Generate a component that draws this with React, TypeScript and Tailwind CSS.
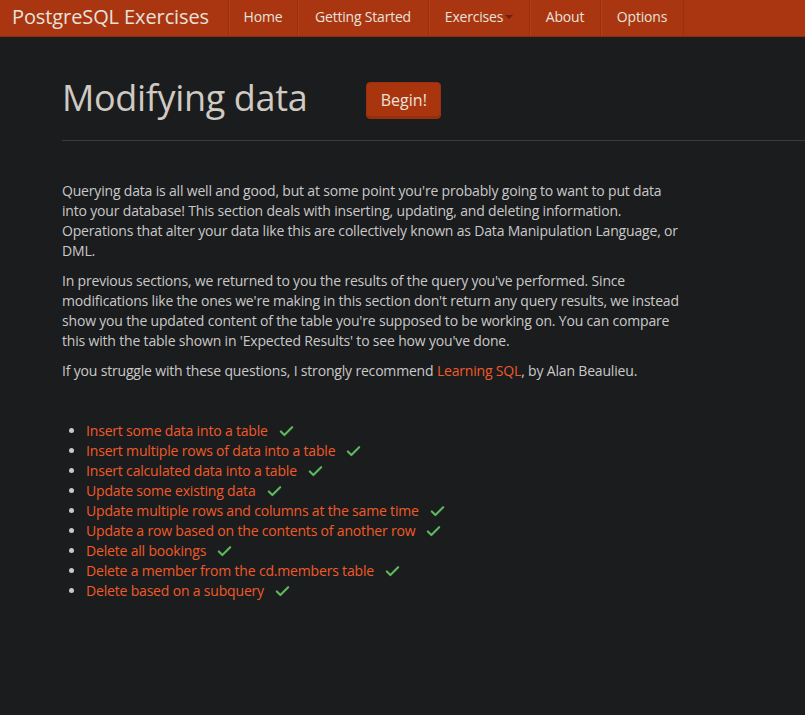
import { Check } from "lucide-react";

const navItems = [
  { label: "Home", width: "w-[69px]" },
  { label: "Getting Started", width: "w-[131px]" },
  { label: "Exercises", width: "w-[101px]" },
  { label: "About", width: "w-[71px]" },
  { label: "Options", width: "w-[83px]" },
];

const questions = [
  "Insert some data into a table",
  "Insert multiple rows of data into a table",
  "Insert calculated data into a table",
  "Update some existing data",
  "Update multiple rows and columns at the same time",
  "Update a row based on the contents of another row",
  "Delete all bookings",
  "Delete a member from the cd.members table",
  "Delete based on a subquery",
];

function Navbar() {
  return (
    <nav className="flex h-[37px] items-stretch bg-[#aa3511] border-b border-[#8f2c0d]">
      <a className="flex w-[228px] items-center pl-3 pb-[3px] text-[20px] tracking-[-0.1px] text-[#e8e2dc]">
        PostgreSQL Exercises
      </a>
      <ul className="flex items-stretch border-l border-[#98300f]">
        {navItems.map((item) => (
          <li
            key={item.label}
            className={`flex ${item.width} items-center justify-center pb-[3px] text-[14px] tracking-[-0.2px] text-[#e8e2dc] border-r border-[#98300f] shadow-[inset_1px_0_0_#b53d17]`}
          >
            {item.label}
            {item.label === "Exercises" && (
              <span className="ml-[2px] mt-[1px] inline-block border-x-[4px] border-t-[4px] border-x-transparent border-t-[#6b2210]" />
            )}
          </li>
        ))}
      </ul>
    </nav>
  );
}

export default function App() {
  return (
    <div
      className="min-h-[715px] bg-[#1b1c1e] text-[#c9c9c9]"
      style={{ fontFamily: '"Open Sans", sans-serif' }}
    >
      <Navbar />
      <div className="pl-[62px]">
        <div className="flex items-center gap-[59px] pt-[39px] pb-[20px]">
          <h1 className="text-[36px] leading-[44px] tracking-[-0.35px] text-[#cfcac2]">Modifying data</h1>
          <button className="mt-[4px] h-[37px] w-[75px] rounded-[4px] border border-[#9a300f] bg-[#a9350f] text-[16px] text-[#eae3dc] shadow-[inset_0_-2px_0_rgba(0,0,0,0.12)]">
            Begin!
          </button>
        </div>
        <hr className="border-t border-[#3a3b3e]" />

        <div className="mt-[40px] w-[622px] text-[14px] leading-[20px] tracking-[-0.18px]">
          <p className="mb-[10px]">
            Querying data is all well and good, but at some point you're probably going to want to put data
            into your database! This section deals with inserting, updating, and deleting information.
            Operations that alter your data like this are collectively known as Data Manipulation Language, or
            DML.
          </p>
          <p className="mb-[10px]">
            In previous sections, we returned to you the results of the query you've performed. Since
            modifications like the ones we're making in this section don't return any query results, we instead
            show you the updated content of the table you're supposed to be working on. You can compare this
            with the table shown in 'Expected Results' to see how you've done.
          </p>
          <p>
            If you struggle with these questions, I strongly recommend{" "}
            <a className="text-[#f05a28]">Learning SQL</a>, by Alan Beaulieu.
          </p>

          <ul className="mt-[40px] list-disc pl-[24px] marker:text-[#c9c9c9]">
            {questions.map((q) => (
              <li key={q}>
                <span className="inline-flex items-center">
                  <a className="text-[#f05a28]">{q}</a>
                  <Check className="ml-[10px] size-[17px] text-[#5cb85c]" strokeWidth={3} />
                </span>
              </li>
            ))}
          </ul>
        </div>
      </div>
    </div>
  );
}
